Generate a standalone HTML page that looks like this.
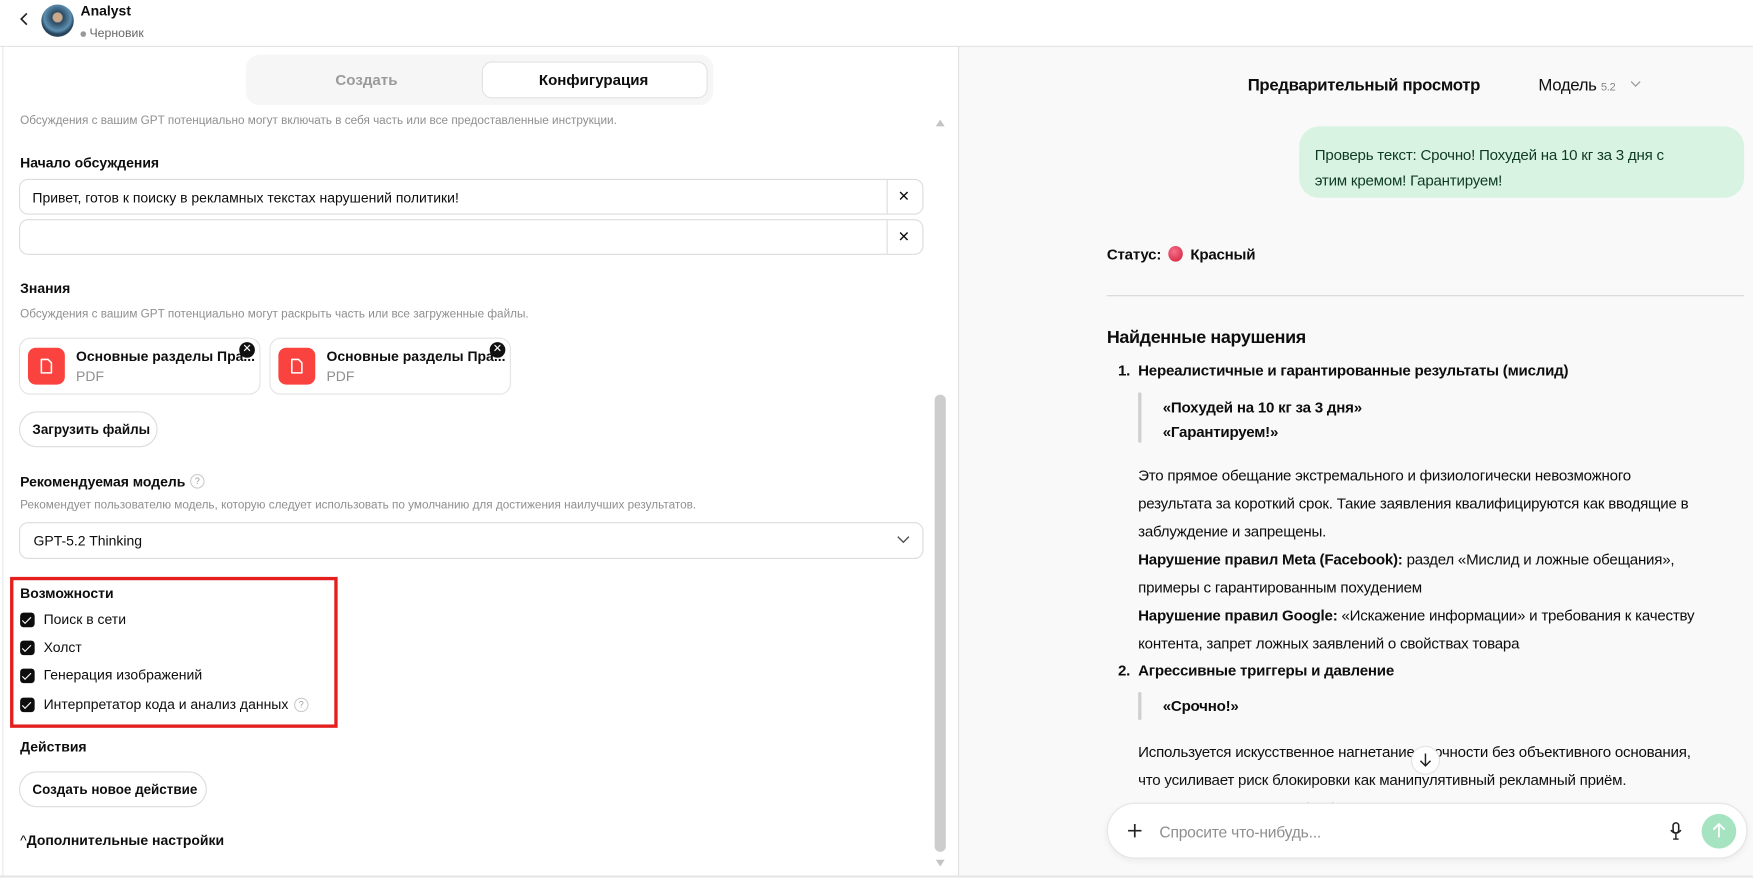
<!DOCTYPE html>
<html><head><meta charset="utf-8">
<style>
html,body{margin:0;padding:0;width:1753px;height:877px;overflow:hidden;background:#fff}
#s{position:absolute;left:0;top:0;width:1568px;height:785px;transform:scale(1.118);transform-origin:0 0;font-family:"Liberation Sans","DejaVu Sans",sans-serif;color:#0d0d0d}
.a{position:absolute;white-space:nowrap}
.b{font-weight:bold}
.g{color:#8f8f8f}
.sm{font-size:10.5px}
.f13{font-size:12.5px}
.box{position:absolute;border:1px solid #dcdcdc;border-radius:8px;background:#fff;box-sizing:border-box}
.cb{position:absolute;left:18px;width:13px;height:13px;background:#0d0d0d;border-radius:3px}
.cb:after{content:"";position:absolute;left:4px;top:1.5px;width:3px;height:6.5px;border:solid #fff;border-width:0 1.8px 1.8px 0;transform:rotate(45deg)}
.rp{font-size:13.5px;letter-spacing:-0.2px}
</style></head><body><div id="s">
<div class="a" style="left:0;top:41px;width:1568px;height:1px;background:#e3e3e3"></div>
<svg class="a" style="left:16px;top:10px" width="12" height="14" viewBox="0 0 12 14"><path d="M8 2 L3 7 L8 12" fill="none" stroke="#222" stroke-width="1.5"/></svg>
<div class="a" style="left:37px;top:4px;width:29px;height:29px;border-radius:50%;background:radial-gradient(circle at 50% 40%,#c9a98c 0 4px,#2b4a63 5px,#5d8fb0 12px,#28445c 15px)"></div>
<div class="a b f13" style="left:72px;top:3px">Analyst</div>
<div class="a" style="left:72px;top:24px;font-size:11px;color:#666"><span style="display:inline-block;width:5px;height:5px;border-radius:50%;background:#999;vertical-align:middle;margin-right:3px"></span>Черновик</div>
<div class="a" style="left:2px;top:42px;width:1px;height:742px;background:#e8e8e8"></div>
<div class="a" style="left:857px;top:42px;width:1px;height:742px;background:#dcdcdc"></div>
<div class="a" style="left:0;top:783px;width:1568px;height:2px;background:#e6e6e6"></div>
<div class="a" style="left:220px;top:49px;width:418px;height:45px;background:#f6f6f6;border-radius:12px"></div>
<div class="a b" style="left:300px;top:64px;font-size:13.5px;color:#9a9a9a">Создать</div>
<div class="a" style="left:431px;top:55px;width:202px;height:33px;background:#fff;border:1px solid #e2e2e2;border-radius:9px;box-sizing:border-box"></div>
<div class="a b" style="left:482px;top:64px;font-size:13.5px">Конфигурация</div>
<div class="a g sm" style="left:18px;top:102px">Обсуждения с вашим GPT потенциально могут включать в себя часть или все предоставленные инструкции.</div>
<svg class="a" style="left:836px;top:106px" width="10" height="8"><path d="M5 1 L9 7 L1 7Z" fill="#c4c4c4"/></svg>
<div class="a" style="left:836px;top:353px;width:10px;height:409px;background:#cdcdcd;border-radius:5px"></div>
<svg class="a" style="left:836px;top:768px" width="10" height="8"><path d="M1 1 L9 1 L5 7Z" fill="#c4c4c4"/></svg>
<div class="a b f13" style="left:18px;top:139px">Начало обсуждения</div>
<div class="box" style="left:17px;top:160px;width:809px;height:32px"></div>
<div class="a" style="left:793px;top:161px;width:1px;height:30px;background:#dcdcdc"></div>
<div class="a f13" style="left:29px;top:170px">Привет, готов к поиску в рекламных текстах нарушений политики!</div>
<div class="a" style="left:803px;top:168px;font-size:13px">✕</div>
<div class="box" style="left:17px;top:196px;width:809px;height:32px"></div>
<div class="a" style="left:793px;top:197px;width:1px;height:30px;background:#dcdcdc"></div>
<div class="a" style="left:803px;top:204px;font-size:13px">✕</div>
<div class="a b f13" style="left:18px;top:251px">Знания</div>
<div class="a g sm" style="left:18px;top:275px">Обсуждения с вашим GPT потенциально могут раскрыть часть или все загруженные файлы.</div>
<div class="box" style="left:17px;top:302px;width:216px;height:51px;border-radius:10px;border-color:#e3e3e3"></div>
<div class="box" style="left:241px;top:302px;width:216px;height:51px;border-radius:10px;border-color:#e3e3e3"></div>
<div class="a" style="left:25px;top:311px;width:33px;height:33px;background:#fa423e;border-radius:7px"></div>
<div class="a" style="left:249px;top:311px;width:33px;height:33px;background:#fa423e;border-radius:7px"></div>
<svg class="a" style="left:35px;top:320px" width="13" height="15"><path d="M2 1.5 H8 L11 4.5 V13.5 H2Z" fill="none" stroke="#fff" stroke-width="1.4" stroke-linejoin="round"/></svg>
<svg class="a" style="left:259px;top:320px" width="13" height="15"><path d="M2 1.5 H8 L11 4.5 V13.5 H2Z" fill="none" stroke="#fff" stroke-width="1.4" stroke-linejoin="round"/></svg>
<div class="a b f13" style="left:68px;top:312px">Основные разделы Пра...</div>
<div class="a b f13" style="left:292px;top:312px">Основные разделы Пра...</div>
<div class="a g f13" style="left:68px;top:330px">PDF</div>
<div class="a g f13" style="left:292px;top:330px">PDF</div>
<div class="a" style="left:214px;top:306px;width:14px;height:14px;border-radius:50%;background:#111;color:#fff;font-size:10px;line-height:14px;text-align:center">✕</div>
<div class="a" style="left:438px;top:306px;width:14px;height:14px;border-radius:50%;background:#111;color:#fff;font-size:10px;line-height:14px;text-align:center">✕</div>
<div class="box" style="left:17px;top:368px;width:124px;height:32px;border-radius:16px"></div>
<div class="a b" style="left:29px;top:377px;font-size:12px">Загрузить файлы</div>
<div class="a b f13" style="left:18px;top:424px">Рекомендуемая модель</div>
<div class="a" style="left:170px;top:424px;width:11px;height:11px;border:1px solid #ccc;border-radius:50%;font-size:8px;color:#999;text-align:center;line-height:11px">?</div>
<div class="a g sm" style="left:18px;top:446px">Рекомендует пользователю модель, которую следует использовать по умолчанию для достижения наилучших результатов.</div>
<div class="box" style="left:17px;top:467px;width:809px;height:33px"></div>
<div class="a f13" style="left:30px;top:477px">GPT-5.2 Thinking</div>
<svg class="a" style="left:802px;top:479px" width="12" height="8"><path d="M1 1 L6 6 L11 1" fill="none" stroke="#555" stroke-width="1.3"/></svg>
<div class="a" style="left:9px;top:516px;width:293px;height:135px;border:3px solid #e3201f;box-sizing:border-box"></div>
<div class="a b f13" style="left:18px;top:524px">Возможности</div>
<div class="cb" style="top:548px"></div><div class="a f13" style="left:39px;top:547px">Поиск в сети</div>
<div class="cb" style="top:573px"></div><div class="a f13" style="left:39px;top:572px">Холст</div>
<div class="cb" style="top:598px"></div><div class="a f13" style="left:39px;top:597px">Генерация изображений</div>
<div class="cb" style="top:624px"></div><div class="a f13" style="left:39px;top:623px">Интерпретатор кода и анализ данных</div>
<div class="a" style="left:263px;top:624px;width:11px;height:11px;border:1px solid #ccc;border-radius:50%;font-size:8px;color:#999;text-align:center;line-height:11px">?</div>
<div class="a b f13" style="left:18px;top:661px">Действия</div>
<div class="box" style="left:17px;top:690px;width:168px;height:32px;border-radius:16px"></div>
<div class="a b" style="left:29px;top:699px;font-size:12px">Создать новое действие</div>
<div class="a b f13" style="left:18px;top:745px"><span style="font-weight:normal">^</span>Дополнительные настройки</div>
<div class="a" style="left:858px;top:42px;width:710px;height:741px;background:#f9f9f9"></div>
<div class="a b" style="left:1116px;top:68px;font-size:15px;letter-spacing:-0.3px">Предварительный просмотр</div>
<div class="a" style="left:1376px;top:68px;font-size:15px;letter-spacing:-0.3px">Модель <span style="font-size:10px;color:#888">5.2</span></div>
<svg class="a" style="left:1458px;top:72px" width="10" height="7"><path d="M1 1 L5 5 L9 1" fill="none" stroke="#999" stroke-width="1.1"/></svg>
<div class="a" style="left:1162px;top:113px;width:398px;height:64px;background:#d9f3e3;border-radius:18px"></div>
<div class="a rp" style="left:1176px;top:127px;color:#0e3b22;line-height:23px">Проверь текст: Срочно! Похудей на 10 кг за 3 дня с<br>этим кремом! Гарантируем!</div>
<div class="a rp b" style="left:990px;top:220px">Статус: <span style="display:inline-block;width:13px;height:14px;border-radius:50%;background:radial-gradient(circle at 40% 35%,#f7708a,#d11a3a);vertical-align:-2px;margin:0 3px"></span> Красный</div>
<div class="a" style="left:990px;top:264px;width:570px;height:1px;background:#d6d6d6"></div>
<div class="a b" style="left:990px;top:294px;font-size:16px;letter-spacing:-0.3px">Найденные нарушения</div>
<div class="a rp b" style="left:1000px;top:324px">1.</div>
<div class="a rp b" style="left:1018px;top:324px">Нереалистичные и гарантированные результаты (мислид)</div>
<div class="a" style="left:1018px;top:351px;width:3px;height:45px;background:#d0d0d0;border-radius:2px"></div>
<div class="a rp b" style="left:1040px;top:354px;line-height:22px">«Похудей на 10 кг за 3 дня»<br>«Гарантируем!»</div>
<div class="a rp" style="left:1018px;top:413px;line-height:25px">Это прямое обещание экстремального и физиологически невозможного<br>результата за короткий срок. Такие заявления квалифицируются как вводящие в<br>заблуждение и запрещены.<br><b>Нарушение правил Meta (Facebook):</b> раздел «Мислид и ложные обещания»,<br>примеры с гарантированным похудением<br><b>Нарушение правил Google:</b> «Искажение информации» и требования к качеству<br>контента, запрет ложных заявлений о свойствах товара</div>
<div class="a rp b" style="left:1000px;top:592px">2.</div>
<div class="a rp b" style="left:1018px;top:592px">Агрессивные триггеры и давление</div>
<div class="a" style="left:1018px;top:619px;width:3px;height:25px;background:#d0d0d0;border-radius:2px"></div>
<div class="a rp b" style="left:1040px;top:624px">«Срочно!»</div>
<div class="a rp" style="left:1018px;top:660px;line-height:25px">Используется искусственное нагнетание срочности без объективного основания,<br>что усиливает риск блокировки как манипулятивный рекламный приём.<br>Нарушение правил Facebook: реклама не должна вызывать чувство тревоги</div>
<div class="a" style="left:862px;top:700px;width:706px;height:83px;background:linear-gradient(rgba(249,249,249,0),#f9f9f9 22px)"></div>
<div class="a" style="left:1262px;top:667px;width:26px;height:26px;border-radius:50%;background:#fff;border:1px solid #e3e3e3;box-sizing:border-box"></div>
<svg class="a" style="left:1268px;top:673px" width="14" height="14"><path d="M7 1 V12 M2.5 7.5 L7 12 L11.5 7.5" fill="none" stroke="#222" stroke-width="1.3"/></svg>
<div class="a" style="left:990px;top:718px;width:573px;height:50px;background:#fff;border:1px solid #e5e5e5;border-radius:25px;box-sizing:border-box;box-shadow:0 2px 6px rgba(0,0,0,.06)"></div>
<svg class="a" style="left:1008px;top:736px" width="14" height="14"><path d="M7 1 V13 M1 7 H13" stroke="#222" stroke-width="1.5"/></svg>
<div class="a" style="left:1037px;top:736px;font-size:14px;color:#8f8f8f;letter-spacing:-0.2px">Спросите что-нибудь...</div>
<svg class="a" style="left:1493px;top:735px" width="12" height="17"><rect x="3.5" y="1" width="5" height="9" rx="2.5" fill="none" stroke="#222" stroke-width="1.4"/><path d="M1.5 7.5 Q6 13 10.5 7.5 M6 11 V15 M3.5 15.5 H8.5" fill="none" stroke="#222" stroke-width="1.3"/></svg>
<div class="a" style="left:1522px;top:728px;width:31px;height:31px;border-radius:50%;background:#a6e4c1"></div>
<svg class="a" style="left:1530px;top:735px" width="15" height="16"><path d="M7.5 14 V2 M2.5 7 L7.5 2 L12.5 7" fill="none" stroke="#fff" stroke-width="1.6"/></svg>
</div></body></html>
